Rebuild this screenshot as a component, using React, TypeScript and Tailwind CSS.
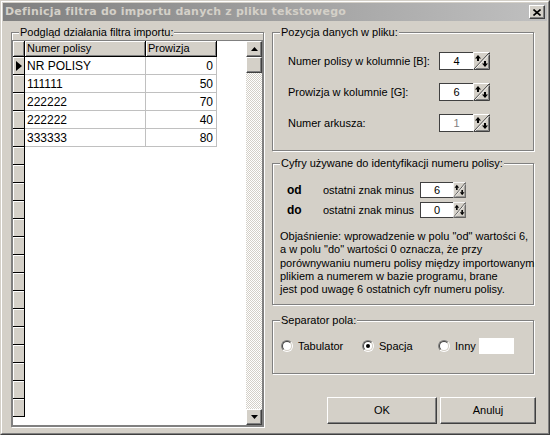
import React from "react";

const raised =
  "bg-[#d4d0c8] border border-t-white border-l-white border-r-[#404040] border-b-[#404040] shadow-[inset_-1px_-1px_0_#808080]";

function Spinner({ w, h }: { w: number; h: number }) {
  return (
    <svg width={w} height={h} viewBox="0 0 17 18" preserveAspectRatio="none" className="block shrink-0">
      <rect width="17" height="18" fill="#d4d0c8" />
      <path d="M0.5 17.5V0.5H16.5" fill="none" stroke="#fff" />
      <path d="M0.5 17.5H16.5V0.5" fill="none" stroke="#404040" />
      <path d="M1.5 16.5H15.5V1.5" fill="none" stroke="#808080" />
      <line x1="1" y1="17" x2="16" y2="1" stroke="#404040" strokeWidth="1" />
      <line x1="2" y1="17" x2="16.5" y2="2" stroke="#ffffff" strokeWidth="0.8" />
      <polygon points="2,6.5 5,3 8,6.5" fill="#000" />
      <rect x="4" y="6" width="2" height="3" fill="#000" />
      <rect x="11" y="9" width="2" height="3" fill="#000" />
      <polygon points="9,11.5 12,15 15,11.5" fill="#000" />
    </svg>
  );
}

function SpinBox({
  value,
  inputW,
  spinW,
  h,
  disabled,
}: {
  value: string;
  inputW: string;
  spinW: number;
  h: number;
  disabled?: boolean;
}) {
  return (
    <div className="flex">
      <div
        className={`${inputW} bg-white border border-[#404040] border-r-0 flex items-center justify-center ${
          disabled ? "text-[#808080]" : "text-black"
        }`}
        style={{ height: h }}
      >
        {value}
      </div>
      <Spinner w={spinW} h={h} />
    </div>
  );
}

function GroupBox({
  label,
  className,
  children,
}: {
  label: string;
  className: string;
  children?: React.ReactNode;
}) {
  return (
    <div className={`relative border border-[#808080] shadow-[inset_1px_1px_0_#fff,1px_1px_0_#fff] ${className}`}>
      <span className="absolute left-[7px] -top-[7px] px-px bg-[#d4d0c8] leading-[13px] whitespace-nowrap">
        {label}
      </span>
      {children}
    </div>
  );
}

function Radio({ checked }: { checked?: boolean }) {
  return (
    <div className="w-[12px] h-[12px] rounded-full border border-t-[#808080] border-l-[#808080] border-r-white border-b-white shrink-0">
      <div className="w-full h-full rounded-full border border-t-[#404040] border-l-[#404040] border-r-[#d4d0c8] border-b-[#d4d0c8] bg-white flex items-center justify-center">
        {checked && <div className="w-[4px] h-[4px] rounded-full bg-black" />}
      </div>
    </div>
  );
}

function ScrollButton({ down }: { down?: boolean }) {
  return (
    <div className={`w-[16px] h-[16px] ${raised} flex items-center justify-center`}>
      <svg width="7" height="4" viewBox="0 0 7 4">
        {down ? <polygon points="0,0 7,0 3.5,4" fill="#000" /> : <polygon points="0,4 7,4 3.5,0" fill="#000" />}
      </svg>
    </div>
  );
}

const rows = [
  ["NR POLISY", "0"],
  ["111111", "50"],
  ["222222", "70"],
  ["222222", "40"],
  ["333333", "80"],
];

const headerCell =
  "h-full bg-[#d4d0c8] border-r border-b border-black shadow-[inset_1px_1px_0_#fff,inset_-1px_-1px_0_#808080] flex items-center";
const indicatorCell =
  "w-[12px] h-full shrink-0 bg-[#d4d0c8] border-r border-b border-black shadow-[inset_1px_1px_0_#fff] flex items-center justify-center";

function Grid() {
  return (
    <div className="h-[386px] border border-[#808080] bg-white flex">
      <div className="w-[233px] flex flex-col">
        <div className="h-[16px] flex shrink-0">
          <div className={`w-[12px] shrink-0 ${headerCell}`} />
          <div className={`w-[121px] shrink-0 pl-[2px] ${headerCell}`}>Numer polisy</div>
          <div className={`w-[71px] shrink-0 pl-[2px] ${headerCell}`}>Prowizja</div>
        </div>
        {Array.from({ length: 20 }).map((_, i) => {
          const r = rows[i];
          return (
            <div key={i} className="h-[18px] flex shrink-0">
              <div className={indicatorCell}>
                {i === 0 && (
                  <svg width="6" height="10" viewBox="0 0 6 10">
                    <polygon points="0,0 6,5 0,10" fill="#000" />
                  </svg>
                )}
              </div>
              {r && (
                <>
                  <div className="w-[121px] shrink-0 h-full border-r border-b border-[#c0c0c0] pl-[2px] flex items-center text-[12px]">
                    {r[0]}
                  </div>
                  <div className="w-[71px] shrink-0 h-full border-r border-b border-[#c0c0c0] pr-[3px] flex items-center justify-end text-[12px]">
                    {r[1]}
                  </div>
                </>
              )}
            </div>
          );
        })}
      </div>
      <div className="w-[16px] flex flex-col">
        <ScrollButton />
        <div className={`w-[16px] h-[16px] ${raised}`} />
        <div className="flex-1 bg-[repeating-conic-gradient(#d4d0c8_0_25%,#ffffff_0_50%)] bg-[length:2px_2px]" />
        <ScrollButton down />
      </div>
    </div>
  );
}

function Button({ label, w }: { label: string; w: string }) {
  return (
    <div className={`${w} h-[27px] ${raised} flex items-center justify-center`}>{label}</div>
  );
}

export default function App() {
  return (
    <div className="w-[550px] h-[435px] overflow-hidden bg-[#d4d0c8] border border-t-[#d4d0c8] border-l-[#d4d0c8] border-r-[#404040] border-b-[#404040] font-['Liberation_Sans',Arial,sans-serif] text-[11px] text-black select-none">
      <div className="h-full flex flex-col border border-t-white border-l-white border-r-[#808080] border-b-[#808080] p-px">
        {/* title bar */}
        <div className="h-[18px] shrink-0 bg-linear-to-r from-[#808080] to-[#c0c0c0] flex items-center justify-between pl-[2px] pr-[2px]">
          <span className="font-['DejaVu_Sans',sans-serif] font-bold text-[11px] tracking-[0.2px] text-[#d4d0c8] whitespace-nowrap">
            Definicja filtra do importu danych z pliku tekstowego
          </span>
          <div className={`w-[16px] h-[14px] ${raised} flex items-center justify-center`}>
            <svg width="8" height="7" viewBox="0 0 8 7">
              <path d="M0.5 0.5L7.5 6.5M7.5 0.5L0.5 6.5" stroke="#000" strokeWidth="1.6" />
            </svg>
          </div>
        </div>

        <div className="flex pl-[8px] pt-[11px] gap-[8px]">
          {/* left */}
          <GroupBox label="Podgląd działania filtra importu:" className="w-[253px] h-[395px] pt-[7px]">
            <Grid />
          </GroupBox>

          {/* right */}
          <div className="w-[264px] flex flex-col">
            <GroupBox label="Pozycja danych w pliku:" className="w-[262px] h-[119px] pt-[19px] pl-[15px]">
              <div className="flex flex-col gap-[13px]">
                <div className="h-[18px] flex items-center">
                  <span className="w-[151px]">Numer polisy w kolumnie [B]:</span>
                  <SpinBox value="4" inputW="w-[34px]" spinW={17} h={18} />
                </div>
                <div className="h-[18px] flex items-center">
                  <span className="w-[151px]">Prowizja w kolumnie [G]:</span>
                  <SpinBox value="6" inputW="w-[34px]" spinW={17} h={18} />
                </div>
                <div className="h-[18px] flex items-center">
                  <span className="w-[151px]">Numer arkusza:</span>
                  <SpinBox value="1" inputW="w-[34px]" spinW={17} h={18} disabled />
                </div>
              </div>
            </GroupBox>

            <GroupBox
              label="Cyfry używane do identyfikacji numeru polisy:"
              className="w-[262px] h-[142px] mt-[12px] pt-[18px] pl-[7px]"
            >
              <div className="flex flex-col gap-[4px] pl-[7px]">
                <div className="h-[16px] flex items-center">
                  <span className="w-[36px] font-bold text-[12px]">od</span>
                  <span className="w-[97px]">ostatni znak minus</span>
                  <SpinBox value="6" inputW="w-[33px]" spinW={13} h={16} />
                </div>
                <div className="h-[16px] flex items-center">
                  <span className="w-[36px] font-bold text-[12px]">do</span>
                  <span className="w-[97px]">ostatni znak minus</span>
                  <SpinBox value="0" inputW="w-[33px]" spinW={13} h={16} />
                </div>
              </div>
              <p className="mt-[12px] leading-[13.3px] whitespace-nowrap">
                Objaśnienie: wprowadzenie w polu "od" wartości 6,
                <br />a w polu "do" wartości 0 oznacza, że przy
                <br />porównywaniu numeru polisy między importowanym
                <br />plikiem a numerem w bazie programu, brane
                <br />jest pod uwagę 6 ostatnich cyfr numeru polisy.
              </p>
            </GroupBox>

            <GroupBox label="Separator pola:" className="w-[262px] h-[54px] mt-[15px] pt-[17px] pl-[8px]">
              <div className="h-[16px] flex items-center">
                <div className="w-[81px] flex items-center gap-[5px]">
                  <Radio />
                  <span>Tabulator</span>
                </div>
                <div className="w-[76px] flex items-center gap-[5px]">
                  <Radio checked />
                  <span>Spacja</span>
                </div>
                <div className="flex items-center">
                  <Radio />
                  <span className="ml-[5px] w-[24px]">Inny</span>
                  <div className="w-[35px] h-[16px] bg-white" />
                </div>
              </div>
            </GroupBox>

            <div className="flex mt-[23px] pl-[55px] gap-[3px]">
              <Button label="OK" w="w-[110px]" />
              <Button label="Anuluj" w="w-[96px]" />
            </div>
          </div>
        </div>
      </div>
    </div>
  );
}
